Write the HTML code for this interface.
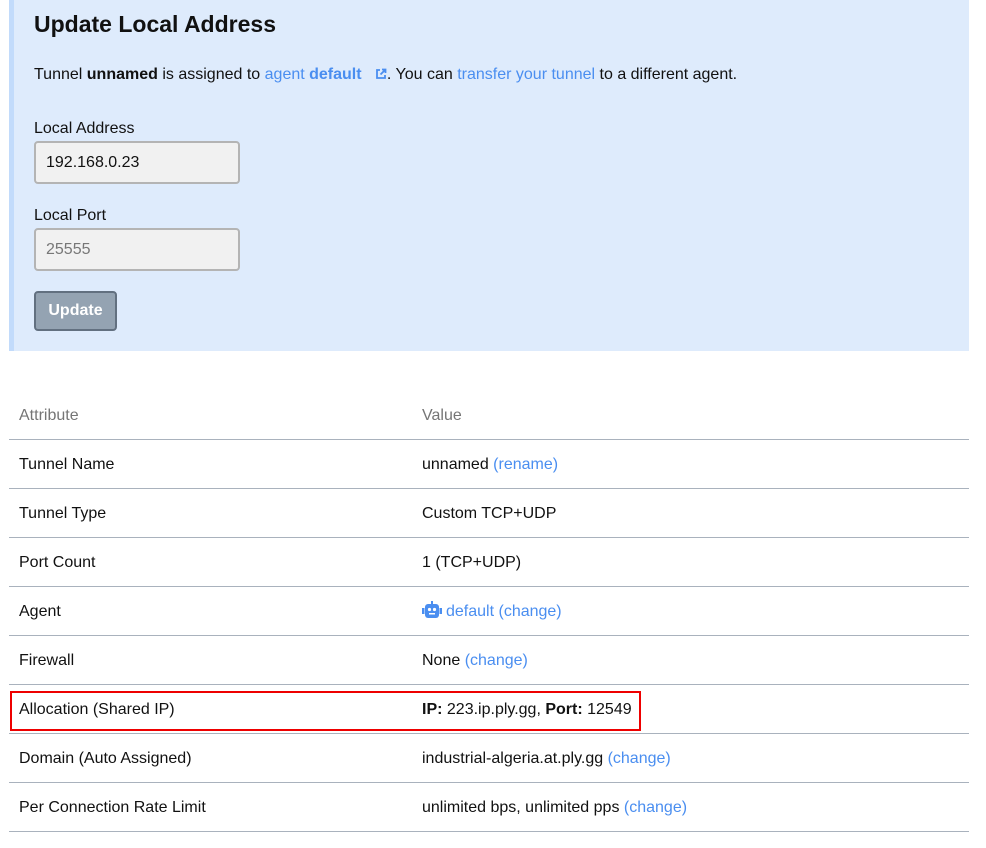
<!DOCTYPE html>
<html><head><meta charset="utf-8"><style>
body{margin:0;background:#fff;font-family:"Liberation Sans",Arial,sans-serif;color:#111;width:986px;height:848px;overflow:hidden;position:relative}
.panel{position:absolute;left:9px;top:0;width:960px;height:351px;background:#deebfc;border-left:5px solid #c2dbfb;box-sizing:border-box}
.abs{position:absolute;white-space:nowrap}
h1{position:absolute;left:20px;top:11px;margin:0;font-size:23px;font-weight:bold}
a{color:#4a8ef0;text-decoration:none}
.inp{position:absolute;left:20px;width:206px;height:43px;border:2px solid #b4b4b4;border-radius:4px;background:#f1f1f1;box-sizing:border-box;font-size:16px;padding:11px 10px}
.btn{position:absolute;left:20px;top:291px;width:83px;height:40px;background:#94a3b2;border:2px solid #627080;border-radius:4px;box-sizing:border-box;color:#fff;font-weight:bold;font-size:16px;text-align:center;line-height:36px}
.row{position:absolute;left:9px;width:960px;height:48px;border-bottom:1px solid #a9b2bd;font-size:16px}
.row span{position:absolute;top:16px;white-space:nowrap}
.c1{left:10px}.c2{left:413px}
</style></head><body>
<div class="panel">
<h1>Update Local Address</h1>
<div class="abs" style="left:20px;top:66px;font-size:16px">Tunnel <b>unnamed</b> is assigned to <a>agent <b>default</b></a>&nbsp;&nbsp;&nbsp;<svg width="12" height="12" viewBox="0 0 12 12" style="vertical-align:-1px"><path d="M5 2H2v8h8V7M7 1.5h3.5V5M10.5 1.5 5.5 6.5" fill="none" stroke="#4a8ef0" stroke-width="1.8"/></svg>. You can <a>transfer your tunnel</a> to a different agent.</div>
<div class="abs" style="left:20px;top:120px;font-size:16px">Local Address</div>
<div class="inp" style="top:141px">192.168.0.23</div>
<div class="abs" style="left:20px;top:207px;font-size:16px">Local Port</div>
<div class="inp" style="top:228px;color:#777">25555</div>
<div class="btn">Update</div>
</div>
<div class="row" style="top:391px;color:#757575"><span class="c1">Attribute</span><span class="c2">Value</span></div>
<div class="row" style="top:440px"><span class="c1">Tunnel Name</span><span class="c2">unnamed <a>(rename)</a></span></div>
<div class="row" style="top:489px"><span class="c1">Tunnel Type</span><span class="c2">Custom TCP+UDP</span></div>
<div class="row" style="top:538px"><span class="c1">Port Count</span><span class="c2">1 (TCP+UDP)</span></div>
<div class="row" style="top:587px"><span class="c1">Agent</span><svg width="20" height="17" viewBox="0 0 20 17" style="position:absolute;left:413px;top:14px"><rect x="9" y="0" width="2" height="3" fill="#4a8ef0"/><rect x="3" y="3" width="14" height="14" rx="3" fill="#4a8ef0"/><rect x="0" y="7" width="2.5" height="6" fill="#4a8ef0"/><rect x="17.5" y="7" width="2.5" height="6" fill="#4a8ef0"/><circle cx="7.5" cy="8.5" r="1.6" fill="#fff"/><circle cx="12.5" cy="8.5" r="1.6" fill="#fff"/><rect x="7" y="12" width="6" height="1.5" fill="#fff"/></svg><span style="left:437px"><a>default (change)</a></span></div>
<div class="row" style="top:636px"><span class="c1">Firewall</span><span class="c2">None <a>(change)</a></span></div>
<div class="row" style="top:685px"><span class="c1">Allocation (Shared IP)</span><span class="c2"><b>IP:</b> 223.ip.ply.gg, <b>Port:</b> 12549</span></div>
<div class="row" style="top:734px"><span class="c1">Domain (Auto Assigned)</span><span class="c2">industrial-algeria.at.ply.gg <a>(change)</a></span></div>
<div class="row" style="top:783px"><span class="c1">Per Connection Rate Limit</span><span class="c2">unlimited bps, unlimited pps <a>(change)</a></span></div>
<div class="abs" style="left:10px;top:691px;width:627px;height:36px;border:2px solid #e00"></div>
</body></html>
